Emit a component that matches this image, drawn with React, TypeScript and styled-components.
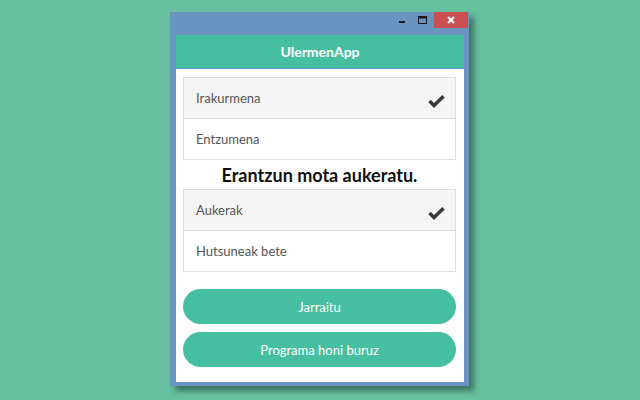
import {FC} from 'react';
import styled, {createGlobalStyle} from 'styled-components';

const GlobalStyle = createGlobalStyle`
	html, body {
		margin: 0;
		padding: 0;
	}
	body {
		background: #67c09f;
		font-family: Lato, 'Noto Sans', sans-serif;
	}
`;

const Desktop = styled.div`
	width: 640px;
	height: 400px;
	display: flex;
	justify-content: center;
	align-items: flex-start;
	padding-top: 12px;
	box-sizing: border-box;
`;

const Window = styled.div`
	width: 299px;
	background: #6a94c0;
	box-shadow: 5px 5px 6px rgba(0, 0, 0, 0.4);
	padding: 0 5px 4px 6px;
	box-sizing: border-box;
	margin-right: 1px;
`;

const TitleBar = styled.div`
	height: 23px;
	display: flex;
	justify-content: flex-end;
	align-items: flex-start;
	margin-right: -4px;
`;

const Control = styled.div`
	width: 20px;
	height: 16px;
	display: flex;
	align-items: center;
	justify-content: center;
`;

const CloseButton = styled.div`
	width: 34px;
	height: 16px;
	background: #c9504f;
	display: flex;
	align-items: center;
	justify-content: center;
	margin-left: 2px;
`;

const Client = styled.div`
	background: #fff;
	display: flex;
	flex-direction: column;
	padding-bottom: 15px;
`;

const Header = styled.div`
	height: 33px;
	background: #45bf9f;
	border-bottom: 1px solid #4f9fd2;
	display: flex;
	align-items: center;
	justify-content: center;
	color: #fff;
	font-weight: 700;
	font-size: 14px;
`;

const Content = styled.div`
	padding: 8px 8px 0 7px;
	display: flex;
	flex-direction: column;
`;

const List = styled.div`
	border: 1px solid #dedede;
	border-top: none;
`;

const Row = styled.div<{selected?: boolean}>`
	height: 40px;
	border-top: 1px solid #dedede;
	background: ${({selected}) => (selected ? '#f5f5f5' : '#fff')};
	display: flex;
	align-items: center;
	justify-content: space-between;
	padding: 0 10px 0 12px;
	color: #555;
	font-size: 13px;
`;

const Check = styled.svg`
	margin-top: 6px;
`;

const Heading = styled.div`
	height: 29px;
	display: flex;
	align-items: center;
	justify-content: center;
	color: #111;
	font-size: 18px;
	font-weight: 700;
`;

const Button = styled.div<{first?: boolean}>`
	height: 35px;
	border-radius: 18px;
	background: #45bf9f;
	color: #fff;
	font-size: 13px;
	display: flex;
	align-items: center;
	justify-content: center;
	margin-top: ${({first}) => (first ? '17px' : '8px')};
`;

const CheckMark: FC = () => (
	<Check width="17" height="13" viewBox="0 0 17 13">
		<path d="M1.5 6 L6 10.5 L15.5 1.2" fill="none" stroke="#3a3a3a" strokeWidth="3.4" />
	</Check>
);

interface Option {
	label: string;
	selected?: boolean;
}

const OptionList: FC<{options: Option[]}> = ({options}) => (
	<List>
		{options.map((o) => (
			<Row key={o.label} selected={o.selected}>
				<span>{o.label}</span>
				{o.selected && <CheckMark />}
			</Row>
		))}
	</List>
);

const App: FC = () => (
	<>
		<GlobalStyle />
		<Desktop>
			<Window>
				<TitleBar>
					<Control>
						<svg width="8" height="8" viewBox="0 0 8 8">
							<rect x="1" y="5" width="6" height="2" fill="#1a1a1a" />
						</svg>
					</Control>
					<Control>
						<svg width="9" height="8" viewBox="0 0 9 8">
							<rect x="0.5" y="0.5" width="8" height="7" fill="none" stroke="#1a1a1a" />
							<rect x="0.5" y="0.5" width="8" height="2" fill="#1a1a1a" />
						</svg>
					</Control>
					<CloseButton>
						<svg width="8" height="8" viewBox="0 0 8 8">
							<path d="M1 1 L7 7 M7 1 L1 7" stroke="#fff" strokeWidth="2" />
						</svg>
					</CloseButton>
				</TitleBar>
				<Client>
					<Header>UlermenApp</Header>
					<Content>
						<OptionList
							options={[{label: 'Irakurmena', selected: true}, {label: 'Entzumena'}]}
						/>
						<Heading>Erantzun mota aukeratu.</Heading>
						<OptionList
							options={[{label: 'Aukerak', selected: true}, {label: 'Hutsuneak bete'}]}
						/>
						<Button first>Jarraitu</Button>
						<Button>Programa honi buruz</Button>
					</Content>
				</Client>
			</Window>
		</Desktop>
	</>
);

export default App;
